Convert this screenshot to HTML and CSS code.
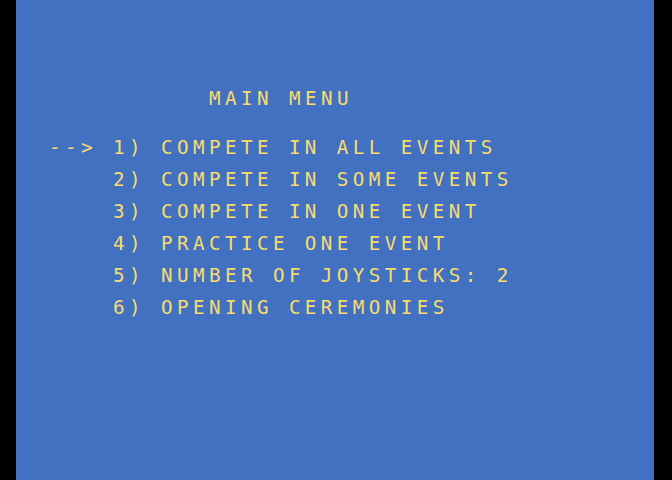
FILE: index.html
```html
<!DOCTYPE html>
<html lang="en">
<head>
    <meta charset="UTF-8">
    <meta name="viewport" content="width=device-width, initial-scale=1.0">
    <title>Main Menu</title>
    <link rel="stylesheet" href="styles.css">
</head>
<body>
    <div class="screen">
        <h1 class="title">MAIN MENU</h1>

        <!-- Menu options, the arrow marks the current choice -->
        <ul class="menu">
            <li class="menu-item">--&gt; 1) COMPETE IN ALL EVENTS</li>
            <li class="menu-item">    2) COMPETE IN SOME EVENTS</li>
            <li class="menu-item">    3) COMPETE IN ONE EVENT</li>
            <li class="menu-item">    4) PRACTICE ONE EVENT</li>
            <li class="menu-item">    5) NUMBER OF JOYSTICKS: 2</li>
            <li class="menu-item">    6) OPENING CEREMONIES</li>
        </ul>
    </div>
</body>
</html>
```

FILE: styles.css
```css
body {
    margin: 0;
    background-color: #000;
    height: 480px;
    overflow: hidden;
}

.screen {
    margin-left: 16px;
    width: 638px;
    height: 480px;
    background-color: #4271c2;
    color: #f8dc6c;
    font-family: "DejaVu Sans Mono", monospace;
    font-size: 19.2px;
    letter-spacing: 4.44px;
    line-height: 32px;
    padding-top: 83px;
    box-sizing: border-box;
}

.title {
    font-size: inherit;
    font-weight: normal;
    margin: 0 0 17px 0;
    padding-left: 193px;
}

.menu {
    list-style: none;
    margin: 0;
    padding: 0 0 0 33px;
}

.menu-item {
    white-space: pre;
}
```
